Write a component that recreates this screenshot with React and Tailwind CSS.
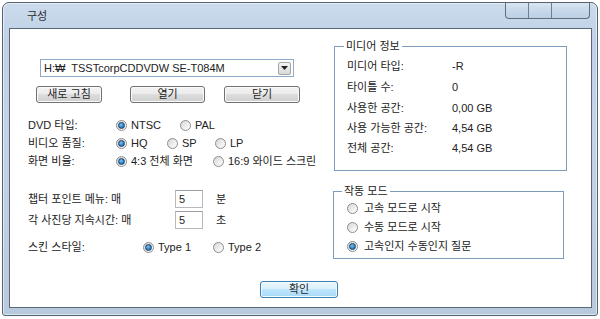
import React from "react";

const FONT = { fontFamily: '"Liberation Sans", "Noto Sans CJK KR", sans-serif' };

function Radio({ checked }) {
  return (
    <span className="flex h-[11px] w-[11px] shrink-0 items-center justify-center rounded-full border border-[#8d8d8d] bg-[linear-gradient(135deg,#d6d6d6_0%,#f4f4f4_70%,#ffffff_100%)]">
      {checked && (
        <span className="h-[7px] w-[7px] rounded-full border border-[#1d3f63] bg-[radial-gradient(circle_at_40%_35%,#7cc4f2_0%,#2a7fc4_60%,#1b5791_100%)]" />
      )}
    </span>
  );
}

function Opt({ checked, label, w, gap = "gap-[4px]" }) {
  return (
    <div className={`flex items-center ${gap} ${w}`}>
      <Radio checked={checked} />
      <span className="whitespace-nowrap">{label}</span>
    </div>
  );
}

function Btn({ children, w }) {
  return (
    <button className={`h-[17px] ${w} rounded-[3px] border border-[#707070] bg-[linear-gradient(180deg,#f3f3f3_0%,#ebebeb_50%,#dddddd_50%,#cfcfcf_100%)] text-[11px] leading-[15px] text-[#1e1e1e] shadow-[inset_0_0_0_1px_#fbfbfb]`}>
      {children}
    </button>
  );
}

function Field({ value }) {
  return (
    <div className="h-[18px] w-[28px] border border-[#b5b9c0] border-t-[#9aa0a8] bg-white pl-[3px] text-[11px] leading-[16px]">
      {value}
    </div>
  );
}

export default function App() {
  return (
    <div className="h-[319px] w-[600px] bg-white text-[11px] text-[#222]" style={FONT}>
      <div className="ml-[2px] mt-[2px] flex h-[314px] w-[596px] flex-col rounded-t-[7px] rounded-b-[3px] border border-[#56626f] bg-[linear-gradient(180deg,#cbdbec_0%,#bed1e6_12%,#c2d4e8_40%,#b7c9dc_100%)] shadow-[inset_0_0_0_1px_rgba(255,255,255,0.55)]">
        {/* title bar */}
        <div className="flex h-[25px] items-start justify-between">
          <span className="ml-[24px] mt-[6px] text-[11px] leading-[15px] text-[#2c2c2c]">구성</span>
          <div className="mr-[7px] flex h-[16px] overflow-hidden rounded-b-[4px] border border-t-0 border-[#5f6e80] bg-[linear-gradient(180deg,#d9e5f1_0%,#c7d8ea_50%,#bccfe3_100%)]">
            <div className="w-[23px] border-r border-[#6f7e90]" />
            <div className="w-[23px] border-r border-[#6f7e90]" />
            <div className="w-[37px]" />
          </div>
        </div>

        {/* client area */}
        <div className="ml-[6px] flex h-[280px] w-[583px] flex-col border border-[#5c6876] bg-white">
          <div className="flex">
            {/* left column */}
            <div className="flex w-[323px] flex-col">
              <div className="ml-[30px] mt-[30px] flex h-[18px] w-[254px] items-center justify-between border border-[#8fabc7] bg-white pl-[3px] pr-[2px]">
                <span className="whitespace-pre leading-[16px]">H:₩  TSSTcorpCDDVDW SE-T084M</span>
                <span className="flex h-[13px] w-[13px] items-center justify-center rounded-[2px] border border-[#a5a5a5] bg-[linear-gradient(180deg,#f5f5f5,#d8d8d8)]">
                  <svg width="7" height="4" viewBox="0 0 7 4">
                    <path d="M0 0 H7 L3.5 4 Z" fill="#222" />
                  </svg>
                </span>
              </div>

              <div className="mt-[9px] flex">
                <div className="ml-[26px]"><Btn w="w-[66px]">새로 고침</Btn></div>
                <div className="ml-[28px]"><Btn w="w-[75px]">열기</Btn></div>
                <div className="ml-[19px]"><Btn w="w-[76px]">닫기</Btn></div>
              </div>

              <div className="mt-[13px] flex flex-col">
                <div className="flex h-[18px] items-center">
                  <span className="ml-[18px] w-[88px]">DVD 타입:</span>
                  <Opt checked label="NTSC" w="w-[64px]" />
                  <Opt label="PAL" />
                </div>
                <div className="flex h-[18px] items-center">
                  <span className="ml-[18px] w-[88px]">비디오 품질:</span>
                  <Opt checked label="HQ" w="w-[51px]" />
                  <Opt label="SP" w="w-[48px]" />
                  <Opt label="LP" />
                </div>
                <div className="flex h-[18px] items-center">
                  <span className="ml-[18px] w-[88px]">화면 비율:</span>
                  <Opt checked label="4:3 전체 화면" w="w-[97px]" />
                  <Opt label="16:9 와이드 스크린" />
                </div>
              </div>

              <div className="mt-[20px] flex h-[18px] items-center">
                <span className="ml-[18px] w-[147px]">챕터 포인트 메뉴: 매</span>
                <Field value="5" />
                <span className="ml-[13px]">분</span>
              </div>
              <div className="mt-[3px] flex h-[18px] items-center">
                <span className="ml-[18px] w-[147px]">각 사진당 지속시간: 매</span>
                <Field value="5" />
                <span className="ml-[13px]">초</span>
              </div>

              <div className="mt-[10px] flex h-[17px] items-center">
                <span className="ml-[18px] w-[115px]">스킨 스타일:</span>
                <Opt checked label="Type 1" w="w-[70px]" />
                <Opt label="Type 2" />
              </div>
            </div>

            {/* right column */}
            <div className="flex flex-col">
              <div className="relative ml-[1px] mt-[17px] h-[125px] w-[233px] border border-[#7d9cbb] pl-[12px] pt-[9px]">
                <span className="absolute -top-[8px] left-[9px] bg-white px-[2px] leading-[15px]">미디어 정보</span>
                <div className="flex h-[21px] items-center"><span className="w-[105px]">미디어 타입:</span><span>-R</span></div>
                <div className="flex h-[21px] items-center"><span className="w-[105px]">타이틀 수:</span><span>0</span></div>
                <div className="flex h-[21px] items-center"><span className="w-[105px]">사용한 공간:</span><span>0,00 GB</span></div>
                <div className="flex h-[19px] items-center"><span className="w-[105px]">사용 가능한 공간:</span><span>4,54 GB</span></div>
                <div className="flex h-[21px] items-center"><span className="w-[105px]">전체 공간:</span><span>4,54 GB</span></div>
              </div>

              <div className="relative mt-[20px] h-[68px] w-[231px] border border-[#7d9cbb] pl-[13px] pt-[6px]">
                <span className="absolute -top-[8px] left-[8px] bg-white px-[2px] leading-[15px]">작동 모드</span>
                <div className="flex h-[20px] items-center"><Opt label="고속 모드로 시작" gap="gap-[6px]" /></div>
                <div className="flex h-[19px] items-center"><Opt label="수동 모드로 시작" gap="gap-[6px]" /></div>
                <div className="flex h-[19px] items-center"><Opt checked label="고속인지 수동인지 질문" gap="gap-[6px]" /></div>
              </div>
            </div>
          </div>

          <div className="ml-[250px] mt-[22px]">
            <button className="h-[17px] w-[78px] rounded-[3px] border border-[#3c7fb1] bg-[linear-gradient(180deg,#eaf6fd_0%,#d9f0fc_50%,#bee6fd_50%,#a7d9f5_100%)] text-[11px] leading-[15px] text-[#1e1e1e] shadow-[inset_0_0_0_1px_#f4fbff]">
              확인
            </button>
          </div>
        </div>
      </div>
    </div>
  );
}
